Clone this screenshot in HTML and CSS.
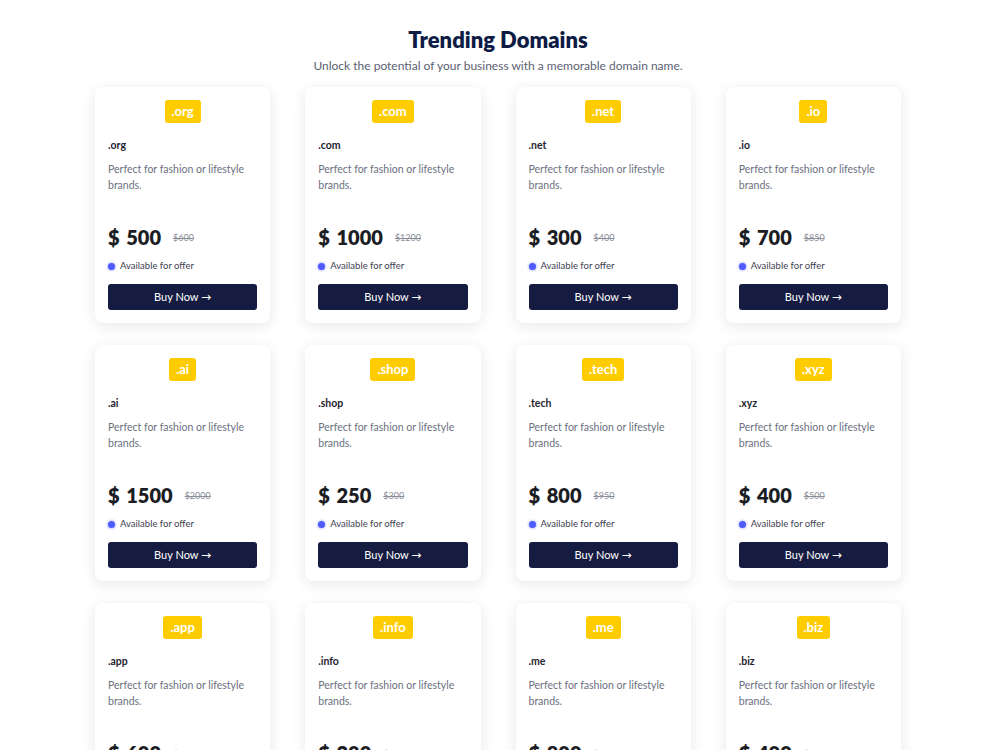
FILE: index.html
```html
<!DOCTYPE html>
<html lang="en">
<head>
<meta charset="utf-8">
<title>Trending Domains</title>
<link rel="stylesheet" href="styles.css">
</head>
<body>
<section class="domains">
  <h1 class="domains-title">Trending Domains</h1>
  <p class="domains-sub">Unlock the potential of your business with a memorable domain name.</p>

  <div class="domain-grid">
    <article class="card">
      <span class="badge">.org</span>
      <h3 class="name">.org</h3>
      <p class="desc">Perfect for fashion or lifestyle brands.</p>
      <div class="price"><span class="now">$ 500</span><s class="was">$600</s></div>
      <div class="avail"><span class="dot"></span>Available for offer</div>
      <button class="buy">Buy Now <span class="arrow">&rarr;</span></button>
    </article>
    <article class="card">
      <span class="badge">.com</span>
      <h3 class="name">.com</h3>
      <p class="desc">Perfect for fashion or lifestyle brands.</p>
      <div class="price"><span class="now">$ 1000</span><s class="was">$1200</s></div>
      <div class="avail"><span class="dot"></span>Available for offer</div>
      <button class="buy">Buy Now <span class="arrow">&rarr;</span></button>
    </article>
    <article class="card">
      <span class="badge">.net</span>
      <h3 class="name">.net</h3>
      <p class="desc">Perfect for fashion or lifestyle brands.</p>
      <div class="price"><span class="now">$ 300</span><s class="was">$400</s></div>
      <div class="avail"><span class="dot"></span>Available for offer</div>
      <button class="buy">Buy Now <span class="arrow">&rarr;</span></button>
    </article>
    <article class="card">
      <span class="badge">.io</span>
      <h3 class="name">.io</h3>
      <p class="desc">Perfect for fashion or lifestyle brands.</p>
      <div class="price"><span class="now">$ 700</span><s class="was">$850</s></div>
      <div class="avail"><span class="dot"></span>Available for offer</div>
      <button class="buy">Buy Now <span class="arrow">&rarr;</span></button>
    </article>

    <article class="card">
      <span class="badge">.ai</span>
      <h3 class="name">.ai</h3>
      <p class="desc">Perfect for fashion or lifestyle brands.</p>
      <div class="price"><span class="now">$ 1500</span><s class="was">$2000</s></div>
      <div class="avail"><span class="dot"></span>Available for offer</div>
      <button class="buy">Buy Now <span class="arrow">&rarr;</span></button>
    </article>
    <article class="card">
      <span class="badge">.shop</span>
      <h3 class="name">.shop</h3>
      <p class="desc">Perfect for fashion or lifestyle brands.</p>
      <div class="price"><span class="now">$ 250</span><s class="was">$300</s></div>
      <div class="avail"><span class="dot"></span>Available for offer</div>
      <button class="buy">Buy Now <span class="arrow">&rarr;</span></button>
    </article>
    <article class="card">
      <span class="badge">.tech</span>
      <h3 class="name">.tech</h3>
      <p class="desc">Perfect for fashion or lifestyle brands.</p>
      <div class="price"><span class="now">$ 800</span><s class="was">$950</s></div>
      <div class="avail"><span class="dot"></span>Available for offer</div>
      <button class="buy">Buy Now <span class="arrow">&rarr;</span></button>
    </article>
    <article class="card">
      <span class="badge">.xyz</span>
      <h3 class="name">.xyz</h3>
      <p class="desc">Perfect for fashion or lifestyle brands.</p>
      <div class="price"><span class="now">$ 400</span><s class="was">$500</s></div>
      <div class="avail"><span class="dot"></span>Available for offer</div>
      <button class="buy">Buy Now <span class="arrow">&rarr;</span></button>
    </article>

    <article class="card">
      <span class="badge">.app</span>
      <h3 class="name">.app</h3>
      <p class="desc">Perfect for fashion or lifestyle brands.</p>
      <div class="price"><span class="now">$ 600</span><s class="was">$750</s></div>
      <div class="avail"><span class="dot"></span>Available for offer</div>
      <button class="buy">Buy Now <span class="arrow">&rarr;</span></button>
    </article>
    <article class="card">
      <span class="badge">.info</span>
      <h3 class="name">.info</h3>
      <p class="desc">Perfect for fashion or lifestyle brands.</p>
      <div class="price"><span class="now">$ 200</span><s class="was">$250</s></div>
      <div class="avail"><span class="dot"></span>Available for offer</div>
      <button class="buy">Buy Now <span class="arrow">&rarr;</span></button>
    </article>
    <article class="card">
      <span class="badge">.me</span>
      <h3 class="name">.me</h3>
      <p class="desc">Perfect for fashion or lifestyle brands.</p>
      <div class="price"><span class="now">$ 800</span><s class="was">$950</s></div>
      <div class="avail"><span class="dot"></span>Available for offer</div>
      <button class="buy">Buy Now <span class="arrow">&rarr;</span></button>
    </article>
    <article class="card">
      <span class="badge">.biz</span>
      <h3 class="name">.biz</h3>
      <p class="desc">Perfect for fashion or lifestyle brands.</p>
      <div class="price"><span class="now">$ 400</span><s class="was">$450</s></div>
      <div class="avail"><span class="dot"></span>Available for offer</div>
      <button class="buy">Buy Now <span class="arrow">&rarr;</span></button>
    </article>
  </div>
</section>
</body>
</html>
```

FILE: styles.css
```css
* {
  box-sizing: border-box;
}

body {
  margin: 0;
  padding: 26px 4px 40px 0;
  background: #ffffff;
  font-family: "Lato", "Open Sans", "DejaVu Sans", sans-serif;
  color: #1f2430;
}

.domains {
  width: 806px;
  margin: 0 auto;
}

.domains-title {
  margin: 0;
  text-align: center;
  font-size: 22px;
  line-height: 28px;
  font-weight: 800;
  color: #0e1c45;
}

.domains-sub {
  margin: 4px 0 0;
  text-align: center;
  font-size: 12px;
  line-height: 16px;
  color: #5b6172;
}

.domain-grid {
  margin-top: 13px;
  display: grid;
  grid-template-columns: repeat(4, 1fr);
  column-gap: 35px;
  row-gap: 22px;
}

.card {
  background: #ffffff;
  border-radius: 8px;
  box-shadow: 0 3px 14px rgba(20, 25, 45, 0.1);
  padding: 13px;
  display: flex;
  flex-direction: column;
}

.badge {
  align-self: center;
  background: #ffcc00;
  color: #ffffff;
  font-weight: 700;
  font-size: 13px;
  line-height: 23px;
  height: 23px;
  padding: 0 7px;
  border-radius: 3px;
}

.name {
  margin: 15px 0 0;
  font-size: 10.5px;
  line-height: 14px;
  font-weight: 700;
  color: #1f2430;
}

.desc {
  margin: 9px 0 0;
  font-size: 10.5px;
  line-height: 16px;
  color: #6b7080;
}

.price {
  margin-top: 32px;
  display: flex;
  align-items: center;
  gap: 12px;
  height: 24px;
}

.now {
  font-size: 20px;
  line-height: 24px;
  font-weight: 800;
  color: #1b1d24;
  word-spacing: 2px;
}

.was {
  font-size: 9px;
  color: #8a8e99;
}

.avail {
  margin-top: 10px;
  display: flex;
  align-items: center;
  gap: 5px;
  font-size: 9.5px;
  line-height: 14px;
  color: #3d4150;
}

.dot {
  width: 7px;
  height: 7px;
  border-radius: 50%;
  background: #4f5bff;
  box-shadow: 0 0 3px rgba(79, 91, 255, 0.7);
}

.buy {
  margin-top: 11px;
  height: 26px;
  width: 100%;
  border: none;
  border-radius: 3px;
  background: #161c41;
  color: #ffffff;
  font-family: inherit;
  font-size: 11px;
  cursor: pointer;
}

.arrow {
  font-family: "DejaVu Sans", sans-serif;
  font-size: 12px;
}
```
